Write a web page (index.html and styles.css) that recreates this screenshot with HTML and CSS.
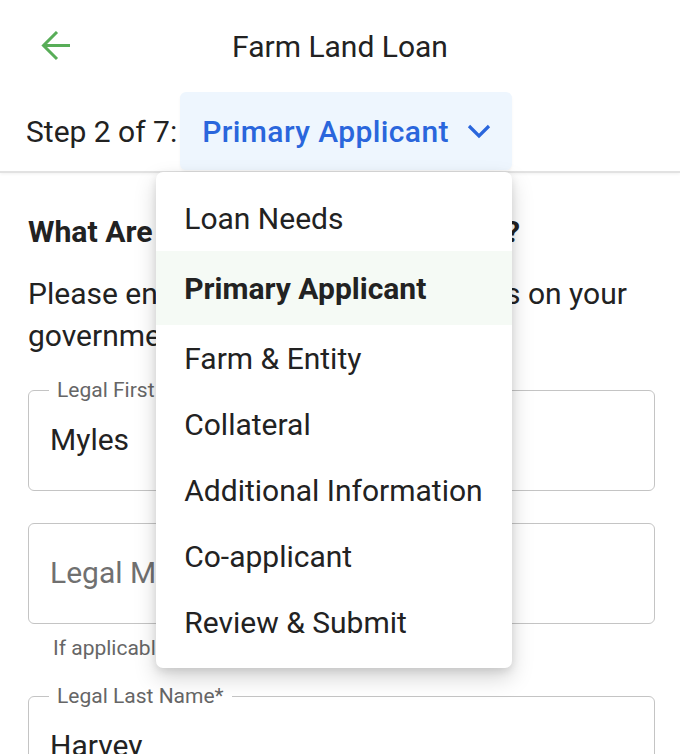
FILE: index.html
```html
<!DOCTYPE html>
<html lang="en">
<head>
  <meta charset="UTF-8" />
  <meta name="viewport" content="width=device-width, initial-scale=1" />
  <title>Farm Land Loan - Primary Applicant</title>
  <link rel="stylesheet" href="styles.css">
</head>
<body>

<header class="topbar">
  <div class="title-row">
    <button class="back" aria-label="Back">
      <svg width="30" height="30" viewBox="0 0 30 30">
        <path d="M29 14.5H2.5M16 1L2.5 14.5L16 28" fill="none" stroke="#58ad58" stroke-width="3" />
      </svg>
    </button>
    <h1>Farm Land Loan</h1>
    <span></span>
  </div>

  <div class="step-row">
    <span class="step-label">Step 2 of 7:</span>
    <div class="step-picker">
      <button class="step-select">
        Primary Applicant
        <svg width="24" height="16" viewBox="0 0 24 16">
          <path d="M2 3L12 13L22 3" fill="none" stroke="#2a66dc" stroke-width="3.2" />
        </svg>
      </button>

      <ul class="step-menu">
        <li>Loan Needs</li>
        <li class="selected">Primary Applicant</li>
        <li>Farm &amp; Entity</li>
        <li>Collateral</li>
        <li>Additional Information</li>
        <li>Co-applicant</li>
        <li>Review &amp; Submit</li>
      </ul>
    </div>
  </div>
</header>

<main class="form">
  <h2>What Are Your Legal Names on File?</h2>
  <p class="intro">Please enter your name as it appears on your government-issued ID.</p>

  <div class="field">
    <label class="field-label" for="firstName">Legal First Name*</label>
    <input class="field-input" id="firstName" value="Myles" />
  </div>

  <div class="field">
    <input class="field-input" id="middleName" placeholder="Legal Middle Name" />
  </div>
  <div class="helper">If applicable</div>

  <div class="field">
    <label class="field-label" for="lastName">Legal Last Name*</label>
    <input class="field-input" id="lastName" value="Harvey" />
  </div>
</main>

</body>
</html>
```

FILE: styles.css
```css
body {
  font-family: Roboto, 'Liberation Sans', sans-serif;
  background-color: #fff;
  margin: 0;
  color: #222;
  overflow: hidden;
}

.topbar {
  border-bottom: 2px solid #e2e2e2;
  box-shadow: 0 1px 3px rgba(0, 0, 0, 0.06);
  position: relative;
  z-index: 2;
}

.title-row {
  height: 92px;
  display: grid;
  grid-template-columns: 1fr auto 1fr;
  align-items: center;
}

.back {
  justify-self: start;
  margin-left: 41px;
  padding: 0;
  border: none;
  background: none;
  display: flex;
  cursor: pointer;
}

.title-row h1 {
  margin: 0;
  font-size: 30px;
  font-weight: 400;
  color: #222;
}

.step-row {
  display: flex;
  align-items: center;
  gap: 3px;
  padding-left: 26px;
  padding-bottom: 1px;
}

.step-label {
  font-size: 30px;
}

.step-picker {
  position: relative;
}

.step-select {
  height: 78px;
  display: flex;
  align-items: center;
  gap: 18px;
  padding: 0 21px 0 22px;
  border: none;
  border-radius: 6px;
  background-color: #eef6fe;
  box-shadow: 0 2px 3px rgba(0, 0, 0, 0.04);
  color: #2a66dc;
  font-family: inherit;
  font-size: 30px;
  font-weight: 500;
  letter-spacing: 0.4px;
  cursor: pointer;
}

.step-menu {
  position: absolute;
  top: calc(100% + 2px);
  left: -24px;
  width: 356px;
  margin: 0;
  padding: 13px 0 13px;
  list-style: none;
  background: #fff;
  border-radius: 7px;
  box-shadow: 0 10px 22px rgba(0, 0, 0, 0.17), 0 3px 8px rgba(0, 0, 0, 0.1);
}

.step-menu li {
  height: 66px;
  display: flex;
  align-items: center;
  padding-left: 28px;
  font-size: 30px;
  color: #222;
  cursor: pointer;
}

.step-menu li.selected {
  height: 73px;
  background-color: #f5faf5;
  font-weight: 700;
  padding-top: 1px;
}

.form {
  padding: 0 25px 0 28px;
}

.form h2 {
  margin: 41px 0 0;
  font-size: 30.2px;
  line-height: 36px;
  font-weight: 700;
  white-space: nowrap;
}

.intro {
  margin: 23px 0 0;
  font-size: 30px;
  line-height: 42px;
}

.field {
  box-sizing: border-box;
  position: relative;
  height: 101px;
  margin-top: 32px;
  display: flex;
  align-items: center;
  padding: 0 21px;
  border: 1.5px solid #c4c4c4;
  border-radius: 6px;
}

.intro + .field {
  margin-top: 33px;
}

.field-label {
  position: absolute;
  top: -13px;
  left: 20px;
  padding: 0 8px;
  background: #fff;
  font-size: 21px;
  line-height: 24px;
  color: #666;
}

.field-input {
  width: 100%;
  padding: 0;
  margin-top: -2px;
  border: none;
  outline: none;
  font-family: inherit;
  font-size: 30px;
  color: #222;
  background: transparent;
}

.field-input::placeholder {
  color: #707070;
}

.helper {
  margin: 12px 0 0 25px;
  font-size: 21px;
  line-height: 24px;
  color: #666;
}

.helper + .field {
  margin-top: 36px;
}
```
